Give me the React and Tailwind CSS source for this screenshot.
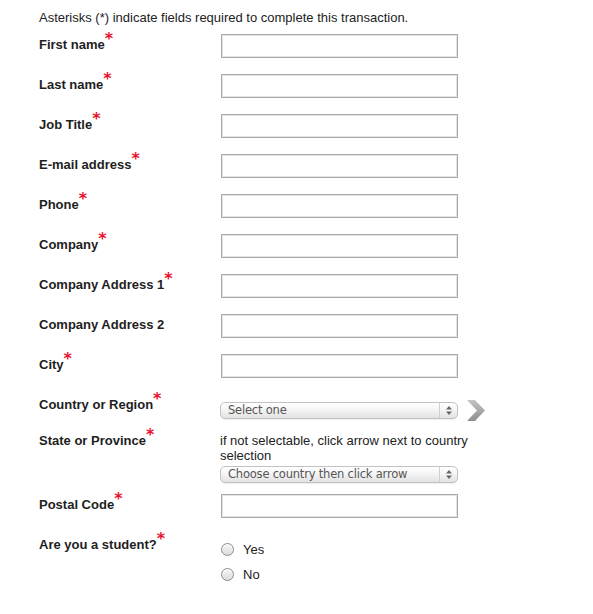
import { useState } from "react";

const fields = [
  { label: "First name", required: true },
  { label: "Last name", required: true },
  { label: "Job Title", required: true },
  { label: "E-mail address", required: true },
  { label: "Phone", required: true },
  { label: "Company", required: true },
  { label: "Company Address 1", required: true },
  { label: "Company Address 2", required: false },
  { label: "City", required: true },
];

const Star = () => (
  <span className="relative -top-[5px] text-[16px] leading-[0] font-bold text-[#e8112d]" style={{ fontFamily: '"DejaVu Sans", sans-serif' }}>*</span>
);

const Label = ({ children, required }) => (
  <div className="w-[182px] shrink-0 mt-[3px] text-[13px] leading-4 font-bold text-[#1e1e1e]">
    {children}
    {required && <Star />}
  </div>
);

const TextInput = () => (
  <input
    type="text"
    className="w-[237px] h-[24px] border border-[#a9a9a9] shadow-[inset_0_0_0_1px_#e4e4e4] bg-white outline-none px-1 text-[13px]"
  />
);

const MacSelect = ({ text }) => (
  <div className="relative w-[238px] h-[17px] rounded-[5px] border border-[#c2c2c2] bg-gradient-to-b from-[#ffffff] via-[#f3f3f3] to-[#e2e2e2] shadow-[0_1px_0_#eee] flex items-center">
    <span className="pl-[7px] text-[11.5px] leading-none text-[#555]" style={{ fontFamily: '"DejaVu Sans", sans-serif', letterSpacing: "-0.2px" }}>
      {text}
    </span>
    <div className="absolute right-0 top-0 h-full w-[18px] border-l border-[#d0d0d0] flex items-center justify-center">
      <svg width="6" height="9" viewBox="0 0 6 9">
        <path d="M3 0 L6 3.5 L0 3.5 Z" fill="#666" />
        <path d="M3 9 L6 5.5 L0 5.5 Z" fill="#666" />
      </svg>
    </div>
  </div>
);

const Chevron = () => (
  <svg width="19" height="21" viewBox="0 0 19 21">
    <defs>
      <linearGradient id="chev" x1="0" y1="0" x2="0" y2="1">
        <stop offset="0" stopColor="#c4c4c4" />
        <stop offset="1" stopColor="#8e8e8e" />
      </linearGradient>
    </defs>
    <polygon points="0,0 8,0 18,10.5 8,21 0,21 10,10.5" fill="url(#chev)" />
  </svg>
);

const Radio = ({ label, checked, onChange }) => (
  <label className="flex items-center gap-[9px] h-[25px] cursor-pointer">
    <span className="w-[13px] h-[13px] rounded-full border border-[#8a8a8a] bg-gradient-to-b from-[#f5f5f5] to-[#dcdcdc] shadow-[inset_0_1px_1px_#fff] flex items-center justify-center">
      {checked && <span className="w-[5px] h-[5px] rounded-full bg-[#333]" />}
    </span>
    <input type="radio" className="hidden" checked={checked} onChange={onChange} />
    <span className="text-[13px] text-[#222]">{label}</span>
  </label>
);

const App = () => {
  const [student, setStudent] = useState(null);

  return (
    <div className="bg-white w-[593px] h-[614px] pl-[39px] pt-[10px]" style={{ fontFamily: '"Liberation Sans", Arial, sans-serif' }}>
      <p className="text-[13px] leading-4 text-[#222] mb-[8px]">
        Asterisks (*) indicate fields required to complete this transaction.
      </p>

      {fields.map((f) => (
        <div key={f.label} className="flex h-[40px]">
          <Label required={f.required}>{f.label}</Label>
          <TextInput />
        </div>
      ))}

      <div className="flex h-[36px]">
        <Label required>Country or Region</Label>
        <div className="flex items-center gap-[9px] mt-[6px] h-[21px] -ml-[1px]">
          <MacSelect text="Select one" />
          <Chevron />
        </div>
      </div>

      <div className="flex h-[64px]">
        <Label required>State or Province</Label>
        <div className="-ml-[1px]">
          <p className="text-[13px] leading-[15px] text-[#222] mt-[3px]">
            if not selectable, click arrow next to country
            <br />
            selection
          </p>
          <div className="mt-[3px]">
            <MacSelect text="Choose country then click arrow" />
          </div>
        </div>
      </div>

      <div className="flex h-[40px]">
        <Label required>Postal Code</Label>
        <TextInput />
      </div>

      <div className="flex">
        <Label required>Are you a student?</Label>
        <div className="mt-[3px]">
          <Radio label="Yes" checked={student === "yes"} onChange={() => setStudent("yes")} />
          <Radio label="No" checked={student === "no"} onChange={() => setStudent("no")} />
        </div>
      </div>
    </div>
  );
};

export default App;
